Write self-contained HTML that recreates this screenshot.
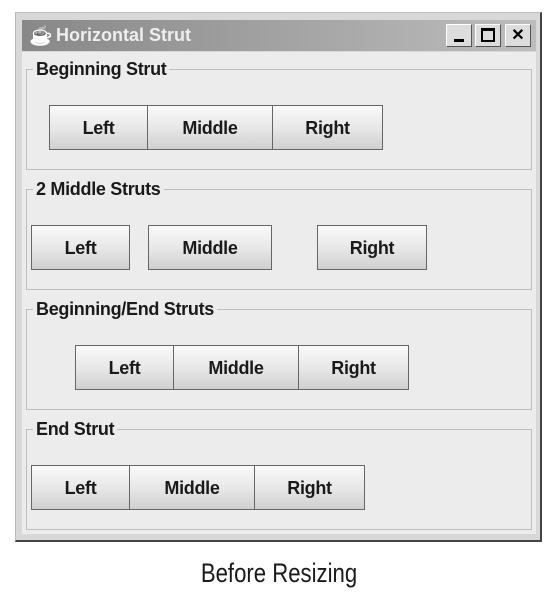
<!DOCTYPE html>
<html><head><style>
body{margin:0;width:558px;height:598px;background:#fff;position:relative;overflow:hidden;font-family:"Liberation Sans",sans-serif}
.win{position:absolute;left:15px;top:12px;width:524px;height:527px;background:#d8d8d8;border:1px solid #bbb;border-right:2px solid #444;border-bottom:2px solid #444}
.tb{position:absolute;left:22px;top:20px;width:514px;height:31px;background:linear-gradient(90deg,#888,#bdbdbd)}
.tt{position:absolute;left:56px;top:25px;color:#eee;font-weight:bold;font-size:18px}
.cont{position:absolute;left:22px;top:52px;width:514px;height:482px;background:#ececec}
.p{position:absolute;left:26px;width:504px;height:99px;border:1px solid #bdbdbd}
.pt{position:absolute;left:33px;background:#ececec;padding:0 3px;font-weight:bold;font-size:18px;color:#1a1a1a;letter-spacing:-0.3px}
.b{position:absolute;height:45px;border:1px solid #666;background:linear-gradient(#fafafa,#e6e6e6 55%,#cfcfcf);box-sizing:border-box;font-weight:bold;font-size:18px;color:#1a1a1a;text-align:center;line-height:45px;letter-spacing:-0.3px}
.wb{position:absolute;top:24px;width:26px;height:23px;box-sizing:border-box;background:#ddd;border:1px solid #fff;border-right-color:#555;border-bottom-color:#555;font-weight:bold;text-align:center;font-size:16px;line-height:21px}
.cap{position:absolute;left:0;width:558px;top:558px;text-align:center;font-size:27px;color:#1a1a1a;transform:scaleX(.82)}
</style></head><body>
<div class="win"></div>
<div class="tb"></div>
<div style="position:absolute;left:29px;top:24px;width:22px;height:24px;font-size:19px;filter:grayscale(1) brightness(1.2)">☕</div>
<div class="tt">Horizontal Strut</div>
<div class="wb" style="left:446px"><div style="position:absolute;left:7px;top:14px;width:10px;height:3px;background:#000"></div></div>
<div class="wb" style="left:475px"><div style="position:absolute;left:5px;top:3px;width:14px;height:14px;border:2px solid #000;border-top-width:3px;box-sizing:border-box"></div></div>
<div class="wb" style="left:505px">✕</div>
<div class="cont"></div>

<div class="p" style="top:69px"></div><div class="pt" style="top:59px">Beginning Strut</div>
<div class="b" style="left:49px;top:105px;width:99px">Left</div>
<div class="b" style="left:147px;top:105px;width:126px">Middle</div>
<div class="b" style="left:272px;top:105px;width:111px">Right</div>

<div class="p" style="top:189px"></div><div class="pt" style="top:179px">2 Middle Struts</div>
<div class="b" style="left:31px;top:225px;width:99px">Left</div>
<div class="b" style="left:148px;top:225px;width:124px">Middle</div>
<div class="b" style="left:317px;top:225px;width:110px">Right</div>

<div class="p" style="top:309px"></div><div class="pt" style="top:299px">Beginning/End Struts</div>
<div class="b" style="left:75px;top:345px;width:99px">Left</div>
<div class="b" style="left:173px;top:345px;width:126px">Middle</div>
<div class="b" style="left:298px;top:345px;width:111px">Right</div>

<div class="p" style="top:429px"></div><div class="pt" style="top:419px">End Strut</div>
<div class="b" style="left:31px;top:465px;width:99px">Left</div>
<div class="b" style="left:129px;top:465px;width:126px">Middle</div>
<div class="b" style="left:254px;top:465px;width:111px">Right</div>

<div class="cap">Before Resizing</div>
</body></html>
